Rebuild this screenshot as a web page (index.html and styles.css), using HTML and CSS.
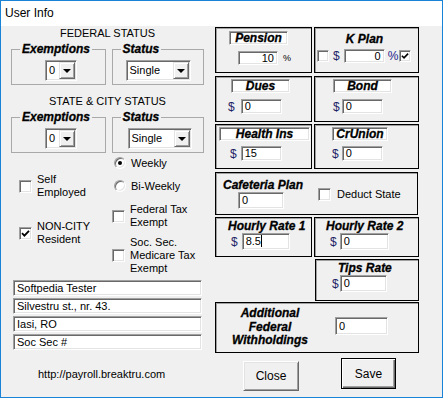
FILE: index.html
```html
<!DOCTYPE html>
<html lang="en">

<head>
    <meta charset="UTF-8">
    <title>User Info</title>
    <link rel="stylesheet" href="styles.css">
</head>

<body>
    <div class="window">
        <div class="titlebar">User Info</div>

        <div class="client">
            <!-- Left side: status, options, address -->
            <div class="left">
                <div class="heading">FEDERAL STATUS</div>
                <div class="groups">
                    <fieldset class="group group-ex">
                        <legend>Exemptions</legend>
                        <div class="combo combo-ex"><span class="combo-text">0</span><span class="drop"></span></div>
                    </fieldset>
                    <fieldset class="group group-st">
                        <legend>Status</legend>
                        <div class="combo combo-st"><span class="combo-text">Single</span><span class="drop"></span></div>
                    </fieldset>
                </div>

                <div class="heading heading-state">STATE &amp; CITY STATUS</div>
                <div class="groups">
                    <fieldset class="group group-ex">
                        <legend>Exemptions</legend>
                        <div class="combo combo-ex"><span class="combo-text">0</span><span class="drop"></span></div>
                    </fieldset>
                    <fieldset class="group group-st">
                        <legend>Status</legend>
                        <div class="combo combo-st combo-st2"><span class="combo-text">Single</span><span class="drop"></span></div>
                    </fieldset>
                </div>

                <div class="options">
                    <div class="opt-left">
                        <div class="check check-self">
                            <span class="box"></span>
                            <span>Self<br>Employed</span>
                        </div>
                        <div class="check check-city">
                            <span class="box">
                                <svg width="9" height="9" viewBox="0 0 9 9"><path d="M1 4.2 L3.4 6.6 L8 1.8" fill="none" stroke="#000" stroke-width="1.8"/></svg>
                            </span>
                            <span>NON-CITY<br>Resident</span>
                        </div>
                    </div>
                    <div class="opt-right">
                        <div class="radio radio-weekly"><span class="circle on"></span>Weekly</div>
                        <div class="radio radio-bi"><span class="circle"></span>Bi-Weekly</div>
                        <div class="check check-fed">
                            <span class="box"></span>
                            <span>Federal Tax<br>Exempt</span>
                        </div>
                        <div class="check check-soc">
                            <span class="box"></span>
                            <span>Soc. Sec.<br>Medicare Tax<br>Exempt</span>
                        </div>
                    </div>
                </div>

                <div class="address">
                    <div class="field">Softpedia Tester</div>
                    <div class="field">Silvestru st., nr. 43.</div>
                    <div class="field">Iasi, RO</div>
                    <div class="field">Soc Sec #</div>
                </div>

                <div class="url">http://payroll.breaktru.com</div>
            </div>

            <!-- Right side: deductions -->
            <div class="right">
                <div class="prow prow-1">
                    <div class="panel p-pension">
                        <div class="lbox lbox-pension">Pension</div>
                        <div class="prow-in in-pension">
                            <span class="tbox tbox-pension">10</span>
                            <span class="pct-small">%</span>
                        </div>
                    </div>
                    <div class="panel p-kplan">
                        <div class="ptitle ptitle-kplan">K Plan</div>
                        <div class="prow-in in-kplan">
                            <span class="box box-sm"></span>
                            <span class="dollar">$</span>
                            <span class="tbox tbox-kplan">0</span>
                            <span class="pct">%</span>
                            <span class="box box-sm">
                                <svg width="8" height="8" viewBox="0 0 9 9"><path d="M1 4.2 L3.4 6.6 L8 1.8" fill="none" stroke="#000" stroke-width="1.8"/></svg>
                            </span>
                        </div>
                    </div>
                </div>

                <div class="prow prow-2">
                    <div class="panel p-dues">
                        <div class="lbox lbox-dues">Dues</div>
                        <div class="prow-in in-dues">
                            <span class="dollar">$</span>
                            <span class="tbox tbox-sm">0</span>
                        </div>
                    </div>
                    <div class="panel p-bond">
                        <div class="lbox lbox-bond">Bond</div>
                        <div class="prow-in in-bond">
                            <span class="dollar">$</span>
                            <span class="tbox tbox-sm">0</span>
                        </div>
                    </div>
                </div>

                <div class="prow prow-3">
                    <div class="panel p-health">
                        <div class="lbox lbox-health">Health Ins</div>
                        <div class="prow-in in-health">
                            <span class="dollar">$</span>
                            <span class="tbox tbox-sm">15</span>
                        </div>
                    </div>
                    <div class="panel p-cru">
                        <div class="lbox lbox-cru">CrUnion</div>
                        <div class="prow-in in-cru">
                            <span class="dollar">$</span>
                            <span class="tbox tbox-sm">0</span>
                        </div>
                    </div>
                </div>

                <div class="panel p-cafe">
                    <div class="cafe-left">
                        <div class="ptitle">Cafeteria Plan</div>
                        <span class="tbox tbox-cafe">0</span>
                    </div>
                    <div class="check check-deduct">
                        <span class="box"></span>
                        <span>Deduct State</span>
                    </div>
                </div>

                <div class="prow prow-5">
                    <div class="panel p-h1">
                        <div class="ptitle">Hourly Rate 1</div>
                        <div class="prow-in in-h1">
                            <span class="dollar">$</span>
                            <span class="tbox tbox-h1">8.5<span class="caret"></span></span>
                        </div>
                    </div>
                    <div class="panel p-h2">
                        <div class="ptitle">Hourly Rate 2</div>
                        <div class="prow-in in-h2">
                            <span class="dollar">$</span>
                            <span class="tbox tbox-h2">0</span>
                        </div>
                    </div>
                </div>

                <div class="panel p-tips">
                    <div class="ptitle ptitle-tips">Tips Rate</div>
                    <div class="prow-in in-tips">
                        <span class="dollar">$</span>
                        <span class="tbox tbox-tips">0</span>
                    </div>
                </div>

                <div class="panel p-add">
                    <div class="ptitle add-title">Additional<br>Federal<br>Withholdings</div>
                    <span class="tbox tbox-add">0</span>
                </div>

                <div class="btn-row">
                    <button class="btn btn-close">Close</button>
                    <button class="btn btn-save">Save</button>
                </div>
            </div>
        </div>
    </div>
</body>

</html>
```

FILE: styles.css
```css
* {
    box-sizing: border-box;
}

body {
    margin: 0;
    font-family: "Liberation Sans", Arial, sans-serif;
    font-size: 11px;
    color: #000;
}

.window {
    width: 443px;
    height: 398px;
    border: 1px solid #1883d7;
    background: #f0f0f0;
    display: flex;
    flex-direction: column;
    overflow: hidden;
}

.titlebar {
    height: 25px;
    background: #fff;
    padding-left: 4px;
    line-height: 24px;
    font-size: 12px;
}

.client {
    flex: 1;
    display: flex;
    padding-left: 10px;
}

/* ---------- left ---------- */
.left {
    width: 193px;
}

.heading {
    height: 14px;
    line-height: 14px;
    text-align: center;
}

.heading-state {
    margin-top: 9px;
}

.groups {
    display: flex;
    gap: 6px;
    margin-top: 2px;
}

.group {
    margin: 0;
    padding: 4px 0 3px;
    border: 1px solid #a9a9a9;
    min-width: 0;
}

.group-ex {
    width: 95px;
}

.group-st {
    width: 93px;
}

legend,
.lbox,
.ptitle {
    font-family: "Liberation Sans", Arial, sans-serif;
    font-style: italic;
    font-weight: bold;
    font-size: 12px;
    -webkit-text-stroke: 0.3px #000;
}

legend {
    margin-left: 8px;
    padding: 0 2px;
    line-height: 14px;
}

.sunken,
.combo,
.field,
.tbox,
.box,
.lbox {
    border: 1px solid;
    border-color: #a0a0a0 #fff #fff #a0a0a0;
    box-shadow: inset 1px 1px 0 #696969, inset -1px -1px 0 #e3e3e3;
}

.combo {
    display: flex;
    height: 21px;
    background: #fff;
    padding: 1px;
}

.combo-ex {
    width: 32px;
    margin-left: 33px;
}

.combo-st {
    width: 65px;
    margin-left: 13px;
}

.combo-st2 {
    margin-left: 15px;
    width: 64px;
}

.combo-text {
    flex: 1;
    padding-left: 2px;
    line-height: 17px;
    font-size: 11px;
}

.drop {
    width: 16px;
    background: #f0f0f0;
    border: 1px solid;
    border-color: #e3e3e3 #696969 #696969 #e3e3e3;
    box-shadow: inset 1px 1px 0 #fff, inset -1px -1px 0 #a0a0a0;
    display: flex;
    align-items: center;
    justify-content: center;
}

.drop::after {
    content: "";
    border-left: 4px solid transparent;
    border-right: 4px solid transparent;
    border-top: 4px solid #000;
    margin-top: 1px;
}

.options {
    display: flex;
    height: 122px;
}

.opt-left {
    width: 94px;
    padding-left: 8px;
}

.opt-right {
    padding-left: 7px;
}

.check {
    display: flex;
    align-items: center;
    gap: 5px;
    line-height: 13px;
}

.box {
    width: 13px;
    height: 13px;
    flex: none;
    background: #fff;
    display: flex;
    align-items: center;
    justify-content: center;
}

.box-sm {
    width: 12px;
    height: 12px;
}

.check-self {
    margin-top: 20px;
}

.check-city {
    margin-top: 21px;
}

.radio {
    display: flex;
    align-items: center;
    gap: 5px;
    height: 14px;
    line-height: 14px;
    padding-left: 2px;
}

.radio-weekly {
    margin-top: 3px;
}

.radio-bi {
    margin-top: 9px;
}

.circle {
    width: 12px;
    height: 12px;
    border-radius: 50%;
    background: #fff;
    border: 1px solid;
    border-color: #a0a0a0 #fff #fff #a0a0a0;
    box-shadow: inset 1px 1px 0 #696969, inset -1px -1px 0 #e3e3e3;
    display: flex;
    align-items: center;
    justify-content: center;
}

.circle.on::after {
    content: "";
    width: 4px;
    height: 4px;
    border-radius: 50%;
    background: #000;
}

.check-fed {
    margin-top: 10px;
}

.check-soc {
    margin-top: 7px;
}

.address {
    display: flex;
    flex-direction: column;
    gap: 2px;
    margin: 5px 0 0 2px;
}

.field {
    width: 189px;
    height: 16px;
    background: #fff;
    padding-left: 3px;
    line-height: 14px;
    font-size: 11px;
}

.url {
    margin: 17px 0 0 27px;
    line-height: 14px;
}

/* ---------- right ---------- */
.right {
    width: 204px;
    margin-left: 11px;
    padding-top: 1px;
    display: flex;
    flex-direction: column;
}

.prow {
    display: flex;
    gap: 2px;
}

.panel {
    border: 1px solid #000;
    box-shadow: inset 1px 1px 0 #a0a0a0;
    display: flex;
    flex-direction: column;
    align-items: flex-start;
}

.prow .panel:first-child {
    width: 97px;
}

.prow .panel:last-child {
    width: 105px;
}

.prow-1,
.prow-2 {
    height: 46px;
}

.prow-2 {
    margin-top: 3px;
}

.prow-3 {
    height: 45px;
    margin-top: 2px;
}

.prow-in {
    display: flex;
    align-items: center;
}

.lbox {
    height: 14px;
    background: #fff;
    line-height: 12px;
    text-align: center;
}

.tbox {
    display: block;
    height: 15px;
    background: #fff;
    padding: 0 3px;
    line-height: 13px;
    font-size: 11px;
}

.dollar {
    font-size: 12px;
    color: #1f1f66;
}

.p-pension {
    padding: 3px 0 0 13px;
}

.lbox-pension {
    width: 59px;
}

.in-pension {
    margin: 6px 0 0 9px;
}

.tbox-pension {
    width: 40px;
    height: 14px;
    line-height: 12px;
    text-align: right;
}

.pct-small {
    font-size: 9px;
    margin-left: 5px;
}

.p-kplan {
    padding: 5px 0 0 2px;
}

.ptitle-kplan {
    align-self: stretch;
    text-align: center;
    padding-right: 6px;
    line-height: 14px;
}

.in-kplan {
    margin-top: 4px;
}

.in-kplan .dollar {
    margin-left: 4px;
}

.tbox-kplan {
    width: 41px;
    height: 14px;
    line-height: 12px;
    text-align: right;
    margin-left: 4px;
}

.pct {
    font-size: 12px;
    color: #23238a;
    margin: 0 1px 0 3px;
}

.p-dues {
    padding: 2px 0 0 12px;
}

.lbox-dues {
    width: 59px;
    margin-left: 3px;
}

.tbox-sm {
    width: 41px;
}

.in-dues {
    margin-top: 6px;
}

.in-dues .tbox {
    margin-left: 6px;
}

.p-bond {
    padding: 2px 0 0 18px;
}

.lbox-bond {
    width: 59px;
}

.in-bond {
    margin-top: 6px;
}

.in-bond .tbox {
    margin-left: 2px;
}

.p-health {
    padding: 2px 0 0 3px;
}

.lbox-health {
    width: 91px;
}

.in-health {
    margin: 5px 0 0 11px;
}

.in-health .tbox {
    margin-left: 4px;
}

.p-cru {
    padding: 2px 0 0 17px;
}

.lbox-cru {
    width: 56px;
}

.in-cru {
    margin-top: 5px;
}

.in-cru .tbox {
    margin-left: 3px;
}

.p-cafe {
    flex-direction: row;
    align-items: center;
    width: 203px;
    height: 43px;
    margin-top: 3px;
    padding-left: 7px;
}

.cafe-left {
    display: flex;
    flex-direction: column;
    align-items: flex-start;
}

.ptitle {
    line-height: 12px;
}

.tbox-cafe {
    width: 46px;
    height: 17px;
    line-height: 15px;
    margin: 1px 0 0 15px;
}

.check-deduct {
    margin: 2px 0 0 15px;
    gap: 6px;
}

.prow-5 {
    height: 40px;
    margin-top: 2px;
}

.p-h1 {
    padding: 2px 0 0 12px;
}

.in-h1 {
    margin: 1px 0 0 3px;
}

.tbox-h1 {
    width: 48px;
    height: 17px;
    line-height: 15px;
    margin-left: 4px;
}

.caret {
    display: inline-block;
    width: 1px;
    height: 12px;
    background: #000;
    vertical-align: -2px;
}

.p-h2 {
    padding: 2px 0 0 11px;
}

.in-h2 {
    margin: 1px 0 0 4px;
}

.tbox-h2 {
    width: 49px;
    height: 17px;
    line-height: 15px;
    margin-left: 3px;
}

.p-tips {
    align-self: flex-end;
    width: 104px;
    height: 42px;
    margin-top: 2px;
    padding: 2px 0 0 0;
}

.ptitle-tips {
    margin-left: 22px;
}

.in-tips {
    margin: 1px 0 0 16px;
}

.tbox-tips {
    width: 47px;
    height: 17px;
    line-height: 15px;
    margin-left: 1px;
}

.p-add {
    flex-direction: row;
    align-items: center;
    width: 204px;
    height: 51px;
    margin-top: 1px;
}

.add-title {
    width: 100px;
    margin-left: 4px;
    text-align: center;
    line-height: 13.5px;
}

.tbox-add {
    width: 53px;
    height: 18px;
    line-height: 16px;
    margin: -3px 0 0 15px;
}

.btn-row {
    display: flex;
    align-items: flex-start;
}

.btn {
    font-family: "Liberation Sans", Arial, sans-serif;
    font-size: 12px;
    color: #000;
    background: #f0f0f0;
    padding: 0;
    border: 1px solid;
    border-color: #fff #696969 #696969 #fff;
    box-shadow: inset 1px 1px 0 #e3e3e3, inset -1px -1px 0 #a0a0a0;
}

.btn-close {
    width: 56px;
    height: 30px;
    margin: 8px 0 0 28px;
}

.btn-save {
    width: 55px;
    height: 31px;
    margin: 5px 0 0 42px;
    border-color: #000;
    box-shadow: inset 1px 1px 0 #fff, inset -1px -1px 0 #696969, inset -2px -2px 0 #a0a0a0;
}
```
